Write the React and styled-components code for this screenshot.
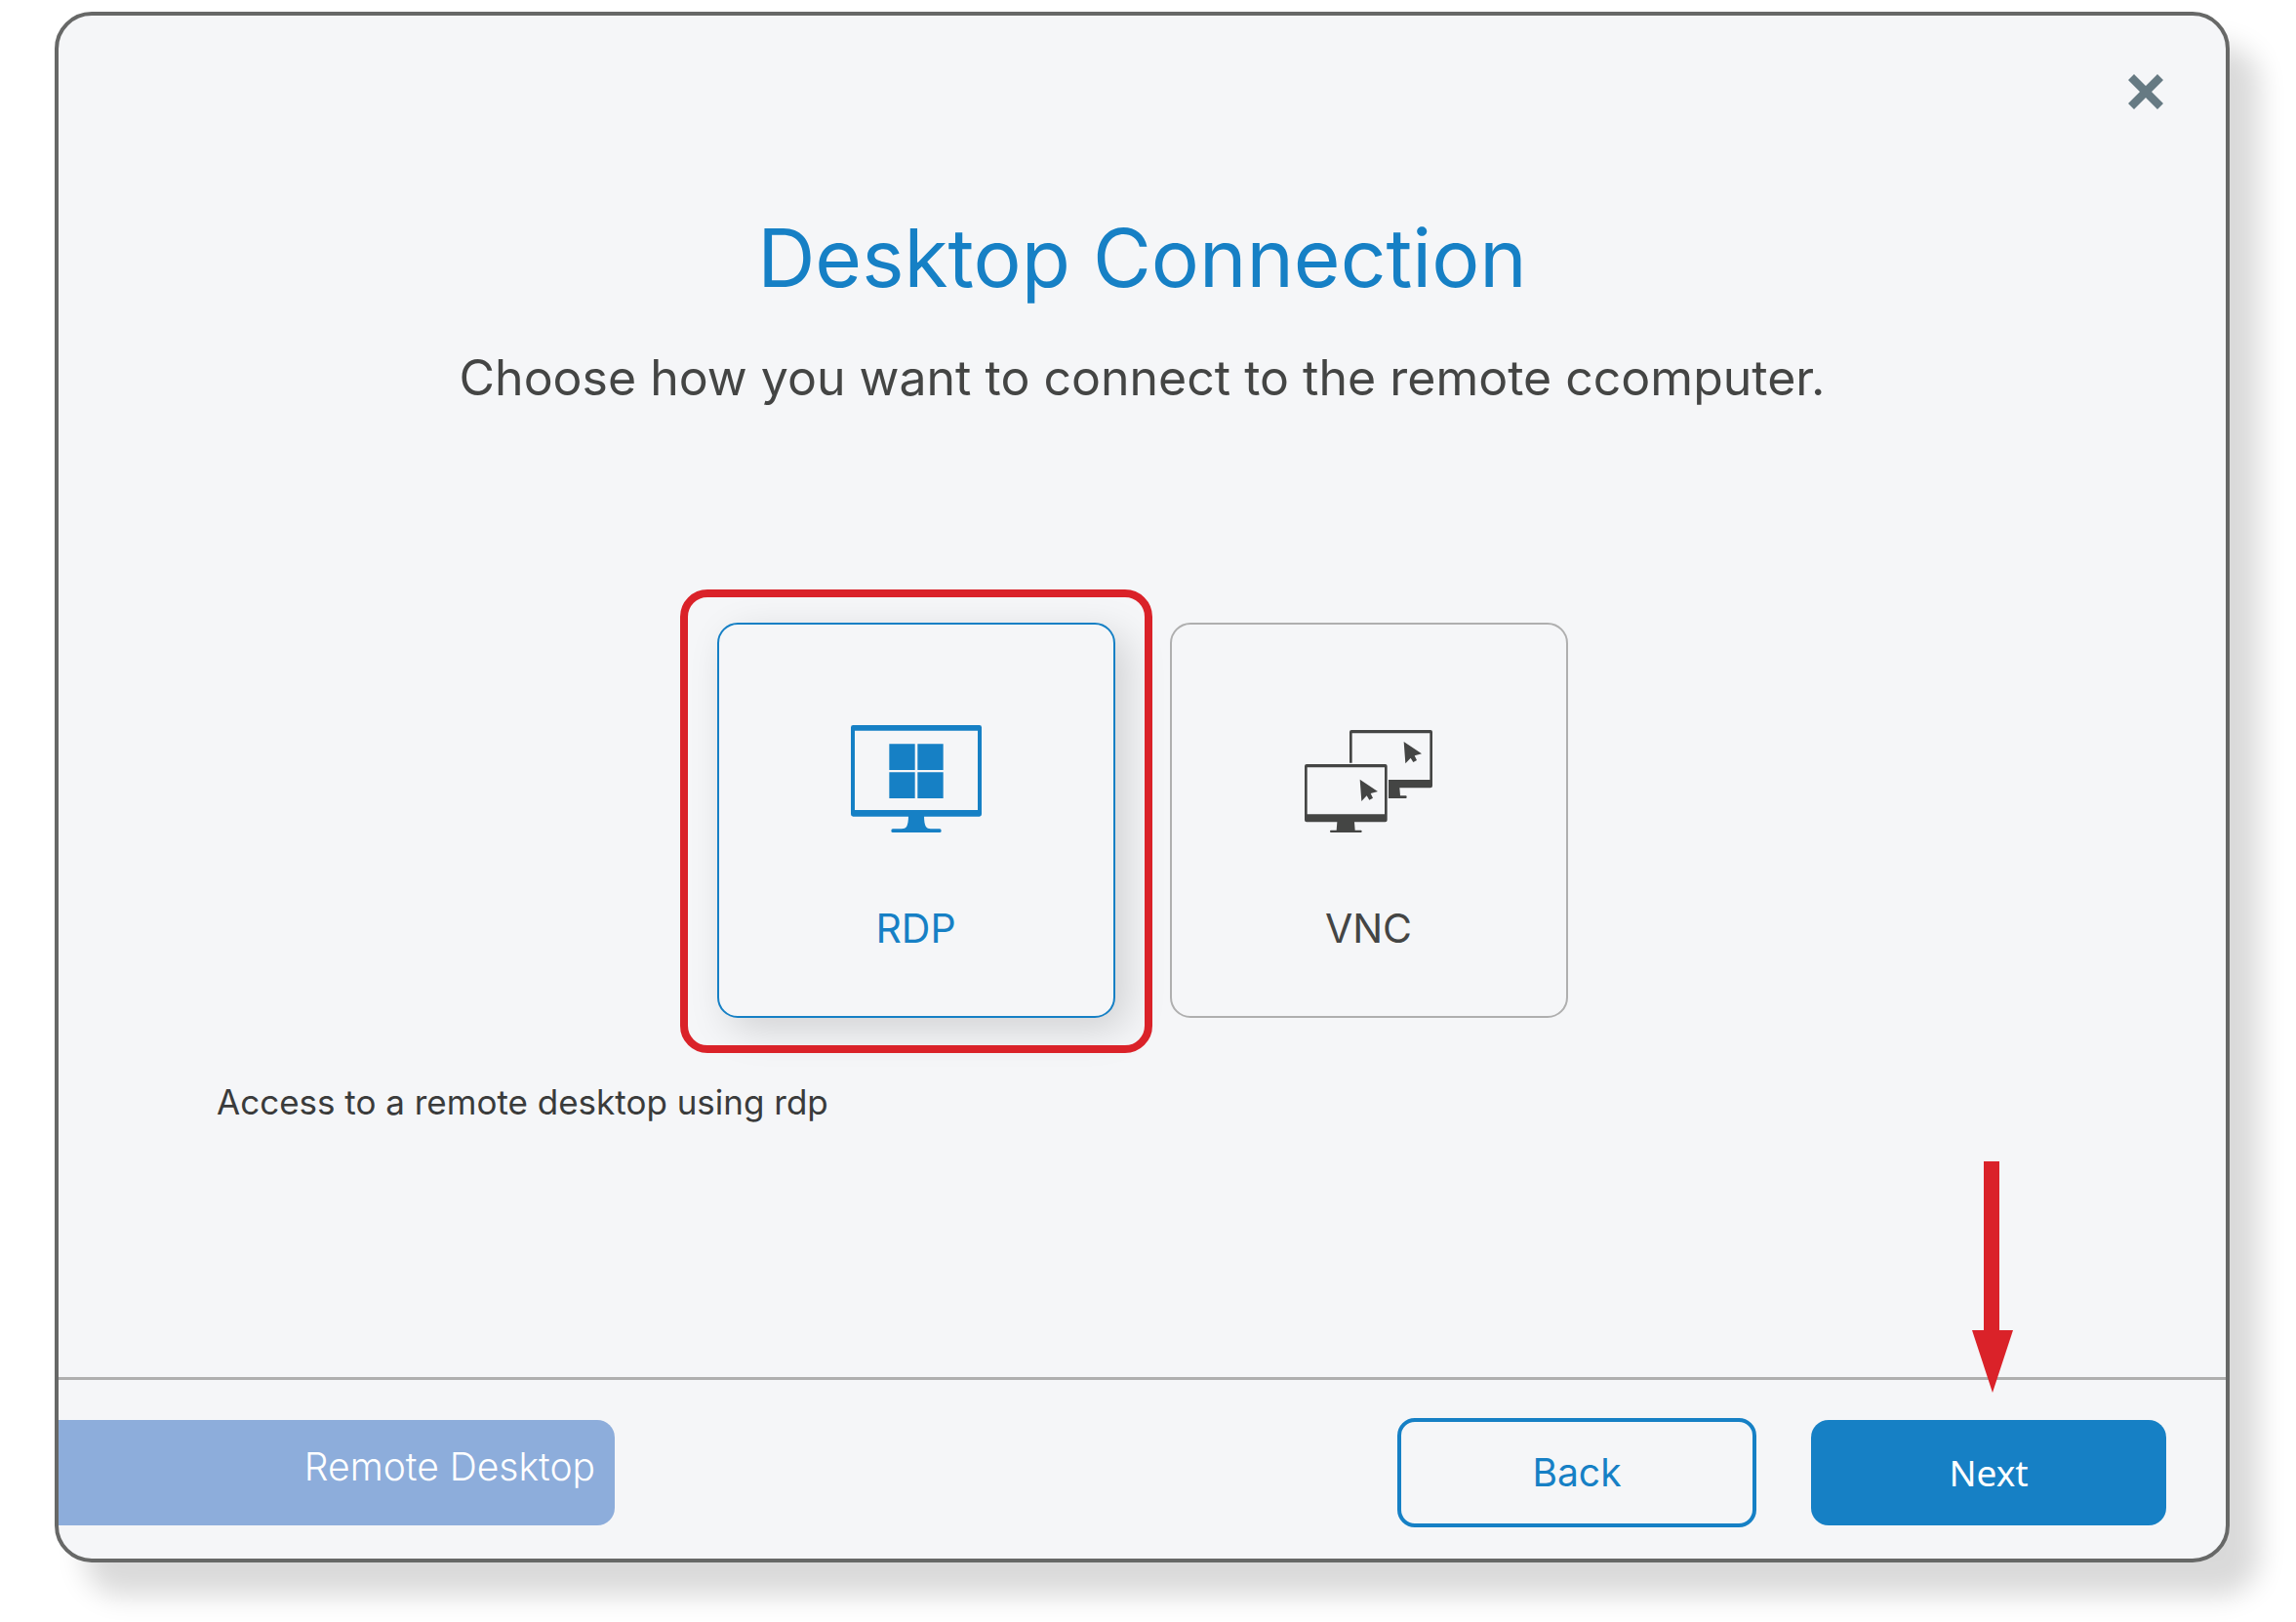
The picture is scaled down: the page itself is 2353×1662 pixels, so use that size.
import React, {useState} from "react";
import styled, {createGlobalStyle} from "styled-components";

const GlobalStyle = createGlobalStyle`
    :root{
        --blue:#1680c5;
        --red:#da2229;
        --surface:#f5f6f8;
        --text:#444544;
        --grey:#afafaf;
    }
    *{
        box-sizing:border-box;
    }
    body{
        margin:0;
        background-color:#fff;
        font-family:Inter, "Liberation Sans", sans-serif;
        color:var(--text);
    }
`;

const options = [
    {id:"rdp", label:"RDP", description:"Access to a remote desktop using rdp", Icon:RdpIcon},
    {id:"vnc", label:"VNC", description:"Access to a remote desktop using vnc", Icon:VncIcon}
]

function RdpIcon(){
    return(
        <svg width="134" height="110" viewBox="96 66 402 330" fill="currentColor" aria-hidden="true">
            <path fillRule="evenodd" d="M103 66H491Q498 66 498 73V340Q498 347 491 347H103Q96 347 96 340V73Q96 66 103 66ZM108 83V327H486V83Z"/>
            <path d="M214 124H293V204H214ZM301 124H380V204H301ZM214 211H293V291H214ZM301 211H380V291H301Z"/>
            <path d="M273 345H321C321 360 323 372 327 379Q331 385 341 385H369Q374 385 374 390.500Q374 396 369 396H225Q220 396 220 390.500Q220 385 225 385H252Q263 385 267 379C271 372 273 360 273 345Z"/>
        </svg>
    )
}

function VncIcon(){
    return(
        <svg width="132" height="110" viewBox="81 66 396 330" fill="currentColor" aria-hidden="true">
            <path d="M219 182V87Q219 81 225 81H468Q474 81 474 87V253Q474 259 468 259H373L375 283H392Q395 283 395 287Q395 291 392 291H339V234H466V91H227V182Z"/>
            <path fillRule="evenodd" d="M87 186H329Q335 186 335 192V358Q335 364 329 364H234L236 389H254Q257 389 257 392.500Q257 396 254 396H162Q159 396 159 392.500Q159 389 162 389H179L181 364H87Q81 364 81 358V192Q81 186 87 186ZM89 196V340H327V196Z"/>
            <path d="M386 117L441 154L419 160L426 174L415 180L407 167L391 184Z"/>
            <path d="M251 233L306 270L284 276L291 290L280 296L272 283L256 300Z"/>
        </svg>
    )
}

export default function App(){
    const [selected, setSelected] = useState("rdp");
    const current = options.find((o) => o.id === selected);

    return(
        <Page>
            <GlobalStyle/>
            <Dialog role="dialog" aria-labelledby="dialog-title">
                <DialogTop>
                    <CloseButton type="button" aria-label="Close">
                        <svg width="36" height="36" viewBox="0 0 36 36" fill="currentColor" aria-hidden="true">
                            <path d="M6 0L18 12L30 0L36 6L24 18L36 30L30 36L18 24L6 36L0 30L12 18L0 6Z"/>
                        </svg>
                    </CloseButton>
                </DialogTop>
                <Content>
                    <Title id="dialog-title">Desktop Connection</Title>
                    <Subtitle>Choose how you want to connect to the remote ccomputer.</Subtitle>
                    <Cards role="radiogroup" aria-labelledby="dialog-title">
                        {options.map(({id, label, Icon}) => (
                            <Card key={id} $active={id === selected}>
                                <input
                                    type="radio"
                                    name="protocol"
                                    value={id}
                                    checked={id === selected}
                                    onChange={() => setSelected(id)}
                                />
                                <Icon/>
                                <span>{label}</span>
                            </Card>
                        ))}
                    </Cards>
                    <Description>{current.description}</Description>
                </Content>
                <Footer>
                    <Progress>Remote Desktop</Progress>
                    <Actions>
                        <BackButton type="button">Back</BackButton>
                        <NextWrapper>
                            <NextButton type="button">Next</NextButton>
                            <Arrow width="42" height="237" viewBox="0 0 42 237" aria-hidden="true">
                                <path d="M12 0H28V173H42L21 237L0 173H12Z"/>
                            </Arrow>
                        </NextWrapper>
                    </Actions>
                </Footer>
            </Dialog>
        </Page>
    )
}

const Page = styled.div`
    display:flex;
    min-height:100vh;
    padding:12px 68px 61px 56px;
`;

const Dialog = styled.section`
    flex:1;
    display:flex;
    flex-direction:column;
    border:4px solid #676867;
    border-radius:38px;
    background-color:var(--surface);
    box-shadow:30px 34px 28px rgba(0, 0, 0, 0.15);
`;

const DialogTop = styled.div`
    display:flex;
    justify-content:flex-end;
    padding:60px 64px 0;
`;

const CloseButton = styled.button`
    display:flex;
    padding:0;
    border:0;
    background:none;
    color:#667a83;
    cursor:pointer;
`;

const Content = styled.div`
    flex:1;
    display:flex;
    flex-direction:column;
    align-items:center;
    padding:103px 162px 40px;
`;

const Title = styled.h1`
    margin:0;
    font-size:82px;
    line-height:100px;
    font-weight:400;
    color:var(--blue);
`;

const Subtitle = styled.p`
    margin:42px 0 0;
    font-size:50px;
    line-height:60px;
`;

const Cards = styled.div`
    display:flex;
    gap:56px;
    margin-top:221px;
`;

const Card = styled.label`
    position:relative;
    display:flex;
    flex-direction:column;
    align-items:center;
    gap:73px;
    width:408px;
    height:405px;
    padding-top:103px;
    border:2px solid ${(props) => props.$active ? "var(--blue)" : "var(--grey)"};
    border-radius:21px;
    background-color:var(--surface);
    box-shadow:${(props) => props.$active ? "12px 12px 40px rgba(0, 0, 0, 0.15)" : "none"};
    color:${(props) => props.$active ? "var(--blue)" : "var(--text)"};
    font-size:41px;
    line-height:50px;
    cursor:pointer;
    input{
        position:absolute;
        opacity:0;
        pointer-events:none;
    }
    &::after{
        content:"";
        display:${(props) => props.$active ? "block" : "none"};
        position:absolute;
        inset:-36px -40px -38px;
        border:8px solid var(--red);
        border-radius:28px;
        pointer-events:none;
    }
`;

const Description = styled.p`
    align-self:flex-start;
    margin:65px 0 0;
    font-size:35px;
    line-height:42px;
    color:#3a3b3b;
`;

const Footer = styled.footer`
    display:flex;
    justify-content:space-between;
    align-items:center;
    padding:39px 61px 32px 0;
    border-top:3px solid var(--grey);
`;

const Progress = styled.div`
    width:570px;
    height:108px;
    padding:20px 20px 0 0;
    border-radius:0 18px 18px 0;
    background-color:#8daddb;
    color:#fff;
    font-size:39px;
    line-height:56px;
    font-weight:300;
    text-align:right;
`;

const Actions = styled.div`
    display:flex;
    align-items:center;
    gap:56px;
`;

const Button = styled.button`
    border-radius:18px;
    line-height:46px;
    cursor:pointer;
`;

const BackButton = styled(Button)`
    width:368px;
    height:112px;
    border:4px solid var(--blue);
    background-color:var(--surface);
    color:var(--blue);
    font-family:Inter, sans-serif;
    font-size:39px;
`;

const NextWrapper = styled.div`
    position:relative;
    display:flex;
`;

const NextButton = styled(Button)`
    width:364px;
    height:108px;
    border:0;
    background-color:var(--blue);
    color:#fff;
    font-family:"Noto Sans", sans-serif;
    font-size:37px;
`;

const Arrow = styled.svg`
    position:absolute;
    right:157px;
    bottom:136px;
    fill:var(--red);
    pointer-events:none;
`;
